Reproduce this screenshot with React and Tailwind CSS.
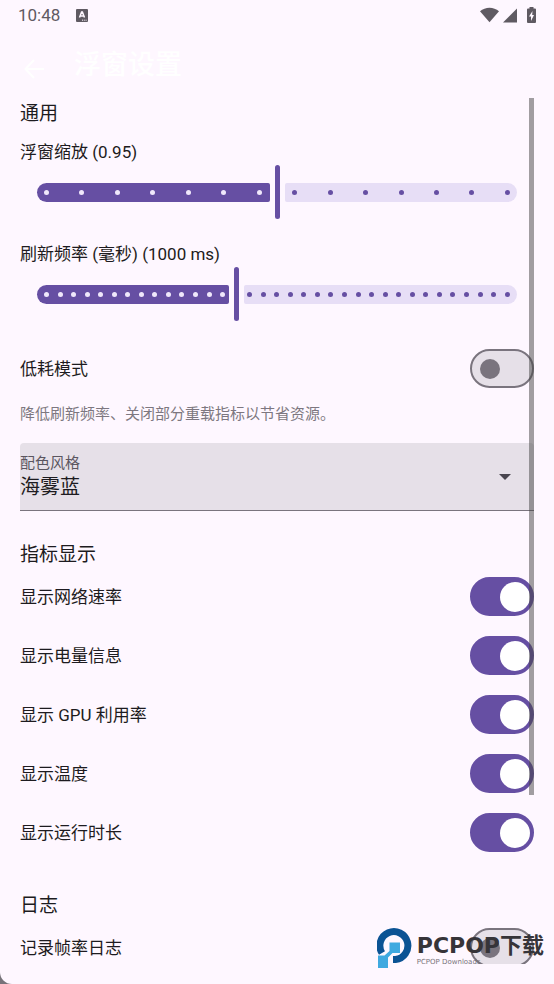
import { useState } from "react";

const METRICAS = ["显示网络速率", "显示电量信息", "显示 GPU 利用率", "显示温度", "显示运行时长"];

const COLORES = ["海雾蓝", "森林绿", "暮光紫"];

function StatusBar() {
  return (
    <div className="flex h-[30px] shrink-0 items-center justify-between px-[18px] text-[#5f5a62]">
      <div className="flex items-center gap-4">
        <span className="text-[17px] leading-5 text-[#5f5a62]">10:48</span>
        <svg viewBox="0 0 12 13" className="h-[13px] w-3">
          <rect width="12" height="13" rx="1" fill="currentColor" />
          <path d="M3.500 8.500 5.600 3h.8L8.500 8.500M4.500 7h3" fill="none" stroke="#fef7ff" strokeWidth="1.500" />
          <path d="M6 11.200h5" stroke="#fef7ff" strokeWidth="1" strokeDasharray="1 .8" />
        </svg>
      </div>
      <div className="flex items-center">
        <svg viewBox="0 0 57 48" className="h-4 w-[19px]" fill="currentColor">
          <path d="M0 13C16-1 41-1 57 13L28.500 46Z" />
        </svg>
        <svg viewBox="0 0 14 16" className="ml-1 h-4 w-3.5" fill="currentColor">
          <path d="M14 1.500V15.500H0Z" />
        </svg>
        <svg viewBox="0 0 9 16" className="ml-2.5 h-4 w-[9px]" fill="currentColor">
          <path fillRule="evenodd" d="M2.500 0h4v1.500H8a1 1 0 0 1 1 1V15a1 1 0 0 1-1 1H1a1 1 0 0 1-1-1V2.500a1 1 0 0 1 1-1h1.500ZM5.500 4 2 9.500h2V14l3-6H5.200Z" />
        </svg>
      </div>
    </div>
  );
}

function SectionTitle({ children }) {
  return <h2 className="pt-1 text-[19px] leading-6">{children}</h2>;
}

function StepSlider({ id, label, min, max, step, ticks, value, onChange }) {
  const f = (value - min) / (max - min);
  return (
    <div>
      <label htmlFor={id} className="block text-[17px] leading-[25px]">
        {label}
      </label>
      <div className="relative mx-[17px] flex h-[54px] items-center gap-[5px]">
        <div
          className="h-[19px] shrink-0 rounded-l-[10px] rounded-r-xs bg-[#664fa3]"
          style={{ width: `calc(2px + (100% - 19px) * ${f})` }}
        />
        <div className="h-[54px] w-[5px] shrink-0 rounded-full bg-[#664fa3]" />
        <div className="h-[19px] flex-1 rounded-l-xs rounded-r-[10px] bg-[#e7def6]" />
        <div className="pointer-events-none absolute inset-x-[7px] flex justify-between">
          {Array.from({ length: ticks }, (_, i) => {
            const t = i / (ticks - 1);
            return (
              <span
                key={i}
                className={t < f - 0.001 ? "size-[5px] rounded-full bg-[#f0e8fb]" : "size-[5px] rounded-full bg-[#664fa3]"}
              />
            );
          })}
        </div>
        <input
          id={id}
          type="range"
          min={min}
          max={max}
          step={step}
          value={value}
          onChange={(e) => onChange(Number(e.target.value))}
          className="absolute inset-0 size-full cursor-pointer opacity-0"
        />
      </div>
    </div>
  );
}

function SwitchRow({ label, defaultChecked = false }) {
  return (
    <label className="flex h-[59px] items-center justify-between text-[17px] leading-6">
      {label}
      <input
        type="checkbox"
        role="switch"
        defaultChecked={defaultChecked}
        className="flex h-[39px] w-16 shrink-0 cursor-pointer appearance-none items-center rounded-full border-2 border-[#7a747e] bg-[#e6e0e8] px-2 before:size-5 before:rounded-full before:bg-[#7a747e] before:content-[''] checked:justify-end checked:border-[#664fa3] checked:bg-[#664fa3] checked:px-0.5 checked:before:size-[30px] checked:before:bg-white"
      />
    </label>
  );
}

function Watermark() {
  return (
    <div className="pointer-events-none absolute right-2.5 bottom-4 flex items-end gap-1">
      <svg viewBox="0 0 36 41" className="h-[41px] w-9" fill="none">
        <path d="M5 26A14 14 0 1 1 18.500 32.500H16" stroke="#0b5394" strokeWidth="7" />
        <path d="M12.500 15.500h10.500v10.500h-7.500L11 30.500V41H1V28.500h6.500l5-4.500Z" fill="#3fa9e0" />
      </svg>
      <div className="pb-0.5 font-['DejaVu_Sans','Noto_Sans_CJK_SC',sans-serif]">
        <p className="text-[22px] leading-6 font-bold text-[#363439]">PCPOP下载</p>
        <p className="text-[7px] leading-2 text-[#77727a]">PCPOP Downloads</p>
      </div>
    </div>
  );
}

export default function App() {
  const [escala, setEscala] = useState(0.95);
  const [intervalo, setIntervalo] = useState(1000);

  return (
    <div className="h-screen bg-[#77737a]">
      <div className="relative flex h-full flex-col overflow-hidden rounded-bl-xl bg-[#fef7ff] pb-5 font-[Roboto,'Noto_Sans_CJK_SC',sans-serif] text-[#1d1b20]">
        <StatusBar />

        <header className="flex h-[68px] shrink-0 items-center gap-[30px] pt-0.5 pl-6 text-white">
          <button type="button" aria-label="返回" className="mt-2">
            <svg viewBox="0 0 20 20" className="size-5" fill="none" stroke="currentColor" strokeWidth="2">
              <path d="M20 10H2M10 1 1.500 10 10 19" />
            </svg>
          </button>
          <h1 className="text-[27px] leading-9 font-medium">浮窗设置</h1>
        </header>

        <div className="relative min-h-0 flex-1">
          <main className="h-full overflow-y-auto px-5 [scrollbar-width:none]">
            <section>
              <SectionTitle>通用</SectionTitle>
              <div className="mt-3.5 flex flex-col gap-[23px]">
                <StepSlider
                  id="escala"
                  label={`浮窗缩放 (${escala.toFixed(2)})`}
                  min={0.6}
                  max={1.3}
                  step={0.05}
                  ticks={14}
                  value={escala}
                  onChange={setEscala}
                />
                <StepSlider
                  id="intervalo"
                  label={`刷新频率 (毫秒) (${intervalo} ms)`}
                  min={300}
                  max={2000}
                  step={50}
                  ticks={35}
                  value={intervalo}
                  onChange={setIntervalo}
                />
              </div>
              <div className="mt-[18px]">
                <SwitchRow label="低耗模式" />
              </div>
              <p className="mt-1.5 text-[15px] leading-5 text-[#7d7780]">降低刷新频率、关闭部分重载指标以节省资源。</p>

              <div className="relative mt-[19px] h-[68px] rounded-t-sm border-b border-[#7a747e] bg-[#e6e0e8] pt-2.5">
                <label htmlFor="color" className="block text-[15px] leading-5 text-[#5b5660]">
                  配色风格
                </label>
                <select id="color" className="block h-7 w-full appearance-none text-[20px] leading-7">
                  {COLORES.map((c) => (
                    <option key={c}>{c}</option>
                  ))}
                </select>
                <svg viewBox="0 0 12 6" className="pointer-events-none absolute top-[31px] right-[23px] h-1.5 w-3" fill="#49454f">
                  <path d="M0 0h12L6 6Z" />
                </svg>
              </div>
            </section>

            <section className="mt-7">
              <SectionTitle>指标显示</SectionTitle>
              {METRICAS.map((m) => (
                <SwitchRow key={m} label={m} defaultChecked />
              ))}
            </section>

            <section className="mt-7">
              <SectionTitle>日志</SectionTitle>
              <SwitchRow label="记录帧率日志" />
            </section>
          </main>
          <div className="pointer-events-none absolute top-0 right-5 h-[697px] w-[5px] bg-[#444444]/50" />
        </div>

        <Watermark />
      </div>
    </div>
  );
}
